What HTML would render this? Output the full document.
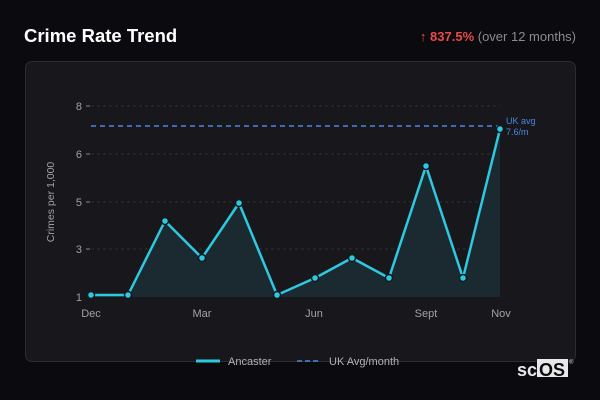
<!DOCTYPE html><html><head><style>
body{margin:0;width:600px;height:400px;background:#0b0b0f;font-family:"DejaVu Sans","Liberation Sans",sans-serif;overflow:hidden;position:relative}
.t{position:absolute;left:24px;top:25px;color:#fff;font-weight:bold;font-size:18.5px;font-family:"Liberation Sans",sans-serif}
.r{position:absolute;right:24px;top:29px;font-size:13px;color:#8a8a90;font-family:"Liberation Sans",sans-serif}
.r b{color:#e84a4a}
.card{position:absolute;left:25px;top:61px;width:549px;height:299px;background:#18181c;border:1px solid #2c2c31;border-radius:7px}
svg{position:absolute;left:0;top:0}
</style></head><body>
<div class="t">Crime Rate Trend</div>
<div class="r"><b>↑ 837.5%</b> (over 12 months)</div>
<div class="card"></div>
<svg width="600" height="400" font-family="Liberation Sans, DejaVu Sans, sans-serif">
<g stroke="#2e2e34" stroke-dasharray="3,3" stroke-width="1">
<line x1="91" y1="106" x2="500" y2="106"/><line x1="91" y1="154" x2="500" y2="154"/><line x1="91" y1="202" x2="500" y2="202"/><line x1="91" y1="249" x2="500" y2="249"/>
</g>
<g stroke="#888" stroke-width="1"><line x1="86" y1="106" x2="90" y2="106"/><line x1="86" y1="154" x2="90" y2="154"/><line x1="86" y1="202" x2="90" y2="202"/><line x1="86" y1="249" x2="90" y2="249"/></g>
<g fill="#a0a0a6" font-size="11" text-anchor="end"><text x="82" y="110">8</text><text x="82" y="158">6</text><text x="82" y="206">5</text><text x="82" y="253">3</text><text x="82" y="301">1</text></g>
<text transform="translate(54,202) rotate(-90)" fill="#a0a0a6" font-size="10.5" text-anchor="middle">Crimes per 1,000</text>
<g fill="#a0a0a6" font-size="11" text-anchor="middle"><text x="91" y="317">Dec</text><text x="202" y="317">Mar</text><text x="314" y="317">Jun</text><text x="426" y="317">Sept</text><text x="501" y="317">Nov</text></g>
<polygon fill="#1b2a30" points="91,297 91,295 128,295 165,221 202,258 239,203 277,295 315,278 352,258 389,278 426,166 463,278 500,129 500,297"/>
<line x1="91" y1="126" x2="500" y2="126" stroke="#4a86e0" stroke-width="1.5" stroke-dasharray="5,4"/>
<text x="506" y="124" fill="#4a86e0" font-size="9">UK avg</text><text x="506" y="135" fill="#4a86e0" font-size="9">7.6/m</text>
<polyline fill="none" stroke="#2ec8e0" stroke-width="2.5" stroke-linejoin="round" points="91,295 128,295 165,221 202,258 239,203 277,295 315,278 352,258 389,278 426,166 463,278 500,129"/>
<g fill="#2ec8e0" stroke="#0f1a1e" stroke-width="1.5">
<circle cx="91" cy="295" r="3.5"/><circle cx="128" cy="295" r="3.5"/><circle cx="165" cy="221" r="3.5"/><circle cx="202" cy="258" r="3.5"/><circle cx="239" cy="203" r="3.5"/><circle cx="277" cy="295" r="3.5"/><circle cx="315" cy="278" r="3.5"/><circle cx="352" cy="258" r="3.5"/><circle cx="389" cy="278" r="3.5"/><circle cx="426" cy="166" r="3.5"/><circle cx="463" cy="278" r="3.5"/><circle cx="500" cy="129" r="3.5"/>
</g>
<line x1="196" y1="361" x2="220" y2="361" stroke="#2ec8e0" stroke-width="3"/>
<text x="228" y="365" fill="#b0b0b6" font-size="11">Ancaster</text>
<line x1="297" y1="361" x2="321" y2="361" stroke="#4a86e0" stroke-width="1.5" stroke-dasharray="5,3"/>
<text x="329" y="365" fill="#b0b0b6" font-size="11">UK Avg/month</text>
<rect x="537" y="359" width="31" height="18" fill="#e8e8e8"/>
<text x="517" y="376" fill="#e8e8e8" font-size="18" font-weight="bold">sc</text>
<text x="539" y="376" fill="#0b0b0f" font-size="18" font-weight="bold">OS</text>
<text x="569" y="364" fill="#ccc" font-size="6">®</text>
</svg>
</body></html>
